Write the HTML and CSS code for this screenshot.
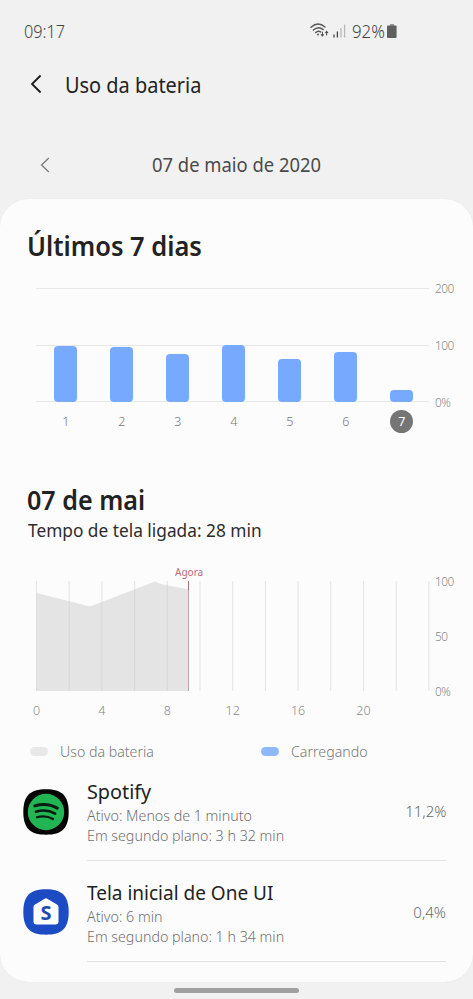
FILE: index.html
```html
<!DOCTYPE html>
<html lang="pt-BR">
<head>
<meta charset="utf-8">
<title>Uso da bateria</title>
<link rel="stylesheet" href="styles.css">
</head>
<body>
<div class="screen">
  <header class="status">
    <span class="t clock">09:17</span>
    <div class="status-icons">
      <svg class="wifi" viewBox="0 0 19 15" width="19" height="15">
        <g fill="none" stroke="#555" stroke-width="1.4" stroke-linecap="round">
          <path d="M1 4.300Q8 -2 15 4"/>
          <path d="M3.400 7Q8.300 2.600 13.200 6.600"/>
          <path d="M5.700 9.500Q8.300 7.200 10.700 8.900"/>
        </g>
        <circle cx="8" cy="11.400" r="1" fill="#555"/>
        <path d="M12.400 8.800v3.800M11 11.400l1.400 1.600 1.400-1.600M16.600 12.600V8.800M15.200 10l1.400-1.600L18 10" fill="none" stroke="#555" stroke-width="1.100"/>
      </svg>
      <svg class="signal" viewBox="0 0 13 14" width="13" height="14">
        <path d="M1 10.500v3M4.400 7.500v6" stroke="#444" stroke-width="1.300"/>
        <path d="M8 4v9.500M11.600 .5v13" stroke="#b8b8b8" stroke-width="1.300"/>
      </svg>
      <span class="t percent">92%</span>
      <svg class="battery" viewBox="0 0 10 14" width="10" height="14">
        <path d="M3 0h4v2H3z" fill="#999"/>
        <rect x="0" y="1.500" width="9.600" height="12.500" rx="1" fill="#606060"/>
      </svg>
    </div>
  </header>

  <div class="titlebar">
    <svg viewBox="0 0 12 20" width="12" height="20"><path d="M10.600 1.500L2 10l8.600 8.500" fill="none" stroke="#1c1c1c" stroke-width="1.800"/></svg>
    <h1 class="t">Uso da bateria</h1>
  </div>

  <nav class="datebar">
    <svg viewBox="0 0 10 16" width="10" height="16"><path d="M8.800 1L1.500 8l7.300 7" fill="none" stroke="#777" stroke-width="1.200"/></svg>
    <span class="t date">07 de maio de 2020</span>
  </nav>

  <main class="card">
    <h2 class="t h-week">Últimos 7 dias</h2>
    <section class="week">
      <div class="plot">
        <div class="bar b1"></div><div class="bar b2"></div><div class="bar b3"></div><div class="bar b4"></div><div class="bar b5"></div><div class="bar b6"></div><div class="bar b7"></div>
      </div>
      <div class="scale"><span>200</span><span>100</span><span>0%</span></div>
      <div class="days"><span>1</span><span>2</span><span>3</span><span>4</span><span>5</span><span>6</span><span class="today">7</span></div>
    </section>

    <h2 class="t h-day">07 de mai</h2>
    <p class="t screen-time">Tempo de tela ligada: 28 min</p>

    <section class="day">
      <div class="now"><span class="t">Agora</span></div>
      <div class="day-row">
        <svg class="area" viewBox="0 0 394 110" width="394" height="110">
          <path d="M.5 12L54 25.500 119 .4 125 3 152.500 8.500V110H.5z" fill="#e4e4e4"/>
          <path d="M.5 0v110M33.200 0v110M65.900 0v110M98.600 0v110M131.300 0v110M164 0v110M196.700 0v110M229.400 0v110M262.100 0v110M294.800 0v110M327.500 0v110M360.200 0v110M392.900 0v110" stroke="#ccc" stroke-opacity=".5" stroke-width="1"/>
          <path d="M152.500 0v110" stroke="#c5a5a5"/>
          <path d="M152.500 0v9" stroke="#a87078"/>
        </svg>
        <div class="scale"><span>100</span><span>50</span><span>0%</span></div>
      </div>
      <div class="hours"><span>0</span><span>4</span><span>8</span><span>12</span><span>16</span><span>20</span></div>
    </section>

    <div class="legend">
      <div class="key"><i class="swatch use"></i><span class="t">Uso da bateria</span></div>
      <div class="key"><i class="swatch charge"></i><span class="t">Carregando</span></div>
    </div>

    <article class="app">
      <svg class="app-icon" viewBox="0 0 46 46" width="46" height="46">
        <path d="M23 .3C39 .3 45.700 7 45.700 23S39 45.700 23 45.700.3 39 .3 23 7 .3 23 .3z" fill="#050505"/>
        <circle cx="23" cy="23" r="18.200" fill="#22b553"/>
        <path d="M11.800 16.900Q24 13.200 34.300 19.100" fill="none" stroke="#0a1b10" stroke-width="3" stroke-linecap="round"/>
        <path d="M12.900 22.800Q23.300 19.700 32.200 24.700" fill="none" stroke="#0a1b10" stroke-width="2.500" stroke-linecap="round"/>
        <path d="M13.900 28.300Q22.500 25.800 30 30" fill="none" stroke="#0a1b10" stroke-width="2.200" stroke-linecap="round"/>
      </svg>
      <div class="app-body">
        <div class="app-text"><h3 class="t spotify">Spotify</h3><p class="t">Ativo: Menos de 1 minuto</p><p class="t">Em segundo plano: 3 h 32 min</p></div>
        <span class="t share">11,2%</span>
      </div>
    </article>
    <article class="app">
      <svg class="app-icon" viewBox="0 0 46 46" width="46" height="46">
        <path d="M23 .3C39 .3 45.700 7 45.700 23S39 45.700 23 45.700.3 39 .3 23 7 .3 23 .3z" fill="#1d4bc4"/>
        <path d="M21.700 9.700q1.300-.8 2.600 0L34.300 15.800q1.200.8 1.200 2.200V32.500q0 3-3 3H13.500q-3 0-3-3V18q0-1.400 1.200-2.200z" fill="#fff"/>
        <text class="home-s" x="23" y="31" text-anchor="middle">S</text>
      </svg>
      <div class="app-body">
        <div class="app-text"><h3 class="t">Tela inicial de One UI</h3><p class="t">Ativo: 6 min</p><p class="t">Em segundo plano: 1 h 34 min</p></div>
        <span class="t share">0,4%</span>
      </div>
    </article>
  </main>
  <footer class="gesture"><i></i></footer>
</div>
</body>
</html>
```
FILE: styles.css
```css
* { box-sizing: border-box; margin: 0; padding: 0; }
body { background: #f1f1f1; font-family: "Noto Sans", sans-serif; font-weight: 300; color: #222; }
.screen { width: 473px; height: 999px; overflow: hidden; display: flex; flex-direction: column; }
svg { display: block; flex: none; }
.t { display: block; width: max-content; white-space: nowrap; transform: scaleX(var(--sx, .93)); transform-origin: left center; }
h1, h2, h3 { font-weight: 400; }

.status { height: 62px; padding-left: 23.500px; display: flex; align-items: center; justify-content: space-between; color: #444; font-size: 17.500px; }
.status-icons { display: flex; align-items: center; width: 163px; }
.wifi { margin-top: -2px; }
.signal { margin: 0 6px 0 4px; }
.percent { --sx: .96; width: 35px; }

.titlebar { height: 44px; padding-left: 30px; display: flex; align-items: center; gap: 22.500px; }
.titlebar h1 { --sx: .927; font-size: 21.500px; color: #222; }

.datebar { height: 93px; padding: 24px 0 0 40px; display: flex; align-items: center; gap: 102px; }
.date { --sx: .943; font-size: 19.500px; font-weight: 400; color: #4a4a4a; }

.card { height: 783px; background: #fcfcfc; border-radius: 28px; padding-top: 31px; flex: none; box-shadow: 0 0 1px #ddd; }
.h-week { --sx: .943; font-size: 27px; font-weight: 600; line-height: 32px; margin-left: 27px; }
.week { display: grid; grid-template-columns: 393px 1fr; margin: 26px 0 0 36px; }
.plot { height: 114px; border-bottom: 1px solid #e8e8e8; background: linear-gradient(#e8e8e8 0 1px, transparent 1px 57px, #e8e8e8 57px 58px, transparent 58px); display: flex; align-items: flex-end; gap: 33px; padding-left: 18.400px; }
.bar { width: 23px; margin-bottom: -1px; background: #77aaff; border-radius: 4px; flex: none; }
.b1 { height: 56.500px; } .b2 { height: 55px; } .b3 { height: 48px; } .b4 { height: 57px; }
.b5 { height: 43.500px; } .b6 { height: 50px; } .b7 { height: 12px; }
.scale { display: flex; flex-direction: column; justify-content: space-between; margin: -8px 0; padding-left: 6px; font-size: 11.800px; line-height: 16px; color: #888; letter-spacing: -.5px; }
.days { display: flex; gap: 33px; padding: 8px 0 0 18.400px; font-size: 12.500px; line-height: 23px; color: #777; }
.days span { width: 23px; text-align: center; flex: none; }
.days .today { background: #757575; border-radius: 50%; color: #fff; font-weight: 400; }

.h-day { --sx: .93; font-size: 27px; font-weight: 600; line-height: 32px; margin: 51px 0 0 27px; }
.screen-time { --sx: .934; font-size: 18.500px; font-weight: 400; line-height: 28px; margin: 0 0 0 27.500px; color: #2c2c2c; }

.day { margin: 20px 0 0 36px; }
.now { height: 17px; padding-left: 139px; font-size: 10.800px; font-weight: 400; line-height: 15px; color: #c06a76; }
.day-row { display: flex; height: 110px; }
.day-row .scale { padding-left: 5px; }
.hours { display: flex; margin: 10px 0 0 -15px; font-size: 12.500px; line-height: 19px; color: #888; }
.hours span { width: 65.400px; flex: none; padding-right: 34.400px; text-align: center; white-space: nowrap; }

.legend { display: flex; height: 24px; margin: 19px 0 0 30px; font-size: 15px; color: #777; }
.key { display: flex; flex: none; align-items: center; gap: 12px; width: 230.500px; }
.key .t { --sx: .945; }
.swatch { width: 18px; height: 9px; border-radius: 5px; }
.use { background: #e8e8e8; }
.charge { background: #8fb8fb; }

.app { display: flex; height: 100.500px; padding-left: 23px; gap: 18px; }
.app:first-of-type { margin-top: -2.500px; }
.app-icon { margin-top: 28px; }
.app-body { width: 359px; height: 100.500px; border-bottom: 1.500px solid #e4e4e4; display: flex; justify-content: space-between; padding-top: 18.500px; }
.app h3 { --sx: .95; font-size: 20px; line-height: 26px; color: #222; }
.app .spotify { --sx: .99; }
.app p { --sx: .97; font-size: 14.700px; line-height: 20px; color: #707070; }
.app .share { --sx: 1.02; font-size: 14.700px; line-height: 20px; margin-top: 22px; color: #686868; transform-origin: right center; }
.home-s { font: 700 20px "Noto Sans", sans-serif; fill: #1d4bb4; }

.gesture { height: 17px; display: flex; justify-content: center; padding: 6px 0 0; }
.gesture i { width: 125px; height: 5px; border-radius: 3px; background: #a0a0a0; }
```
